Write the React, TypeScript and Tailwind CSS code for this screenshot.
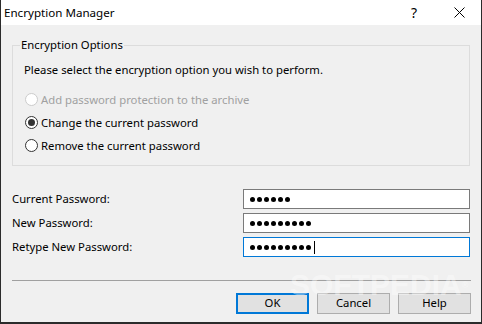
import React from "react";

const font = { fontFamily: '"Noto Sans", "Open Sans", Arial, sans-serif' };

function Dots({ n, caret }: { n: number; caret?: boolean }) {
  return (
    <div className="flex items-center gap-[2px] pl-[6px] h-full">
      {Array.from({ length: n }).map((_, i) => (
        <span key={i} className="block w-[5px] h-[5px] rounded-full bg-black" />
      ))}
      {caret && <span className="block w-[1px] h-[13px] bg-black ml-[1px]" />}
    </div>
  );
}

function Radio({ label, checked, disabled }: { label: string; checked?: boolean; disabled?: boolean }) {
  return (
    <div className="flex items-center h-[23px]">
      <span
        className={
          "flex items-center justify-center w-[13px] h-[13px] rounded-full border bg-white box-border " +
          (disabled ? "border-[#cccccc]" : "border-[#333333]")
        }
      >
        {checked && <span className="block w-[7px] h-[7px] rounded-full bg-[#333333]" />}
      </span>
      <span className={"ml-[3px] text-[11.3px] leading-[16px] " + (disabled ? "text-[#a0a0a0]" : "text-black")}>
        {label}
      </span>
    </div>
  );
}

function Field({ label, n, focused, caret }: { label: string; n: number; focused?: boolean; caret?: boolean }) {
  return (
    <div className="flex items-center h-[20px]">
      <span className="w-[231px] text-[11.3px] leading-[16px] text-black">{label}</span>
      <div
        className={
          "w-[228px] h-[20px] bg-white border box-border " +
          (focused ? "border-[#0078d7]" : "border-[#7a7a7a]")
        }
      >
        <Dots n={n} caret={caret} />
      </div>
    </div>
  );
}

function Button({ label, focused }: { label: string; focused?: boolean }) {
  return (
    <div
      className={
        "w-[73px] h-[21px] flex items-center justify-center bg-[#e1e1e1] box-border text-[11.3px] text-black " +
        (focused ? "border-2 border-[#0078d7]" : "border border-[#adadad]")
      }
    >
      {label}
    </div>
  );
}

export default function App() {
  return (
    <div className="w-[482px] h-[324px] flex flex-col bg-[#f0f0f0] relative overflow-hidden" style={font}>
      {/* Title bar */}
      <div className="h-[25px] bg-white flex items-center shrink-0 border-l border-r border-[#2b2b2b]">
        <span className="ml-[3px] text-[11.6px] text-black leading-[16px]">Encryption Manager</span>
        <span className="ml-auto text-[14px] text-black mr-[37px] leading-[16px]">?</span>
        <svg width="11" height="11" viewBox="0 0 11 11" className="mr-[16px]">
          <path d="M0.5 0.5 L10.5 10.5 M10.5 0.5 L0.5 10.5" stroke="#000" strokeWidth="1" fill="none" />
        </svg>
      </div>

      {/* Body */}
      <div className="flex-1 flex flex-col border-l border-r border-b-2 border-[#2b2b2b] px-[11px]">
        {/* Group box */}
        <div className="relative mt-[20px] h-[121px] border border-[#dcdcdc] box-border pl-[11px] pt-[16px]">
          <span className="absolute -top-[9px] left-[7px] px-[1px] bg-[#f0f0f0] text-[11.3px] leading-[16px] text-black">
            Encryption Options
          </span>
          <div className="text-[11.3px] leading-[16px] text-black">
            Please select the encryption option you wish to perform.
          </div>
          <div className="mt-[10px] ml-[1px] flex flex-col">
            <Radio label="Add password protection to the archive" disabled />
            <Radio label="Change the current password" checked />
            <Radio label="Remove the current password" />
          </div>
        </div>

        {/* Fields */}
        <div className="mt-[23px] flex flex-col gap-[4px]">
          <Field label="Current Password:" n={6} />
          <Field label="New Password:" n={9} />
          <Field label="Retype New Password:" n={9} focused caret />
        </div>

        {/* Separator */}
        <div className="mt-[23px] h-[1px] bg-[#a0a0a0] w-[459px]" />

        {/* Buttons */}
        <div className="mt-[12px] flex justify-end gap-[8px] w-[459px]">
          <Button label="OK" focused />
          <Button label="Cancel" />
          <Button label="Help" />
        </div>
      </div>

      {/* Watermark */}
      <div
        className="absolute left-[290px] top-[268px] text-[30px] font-bold text-white/40 leading-[34px] pointer-events-none select-none"
        style={{ fontFamily: '"Liberation Sans", Arial, sans-serif' }}
      >
        SOFTPEDIA<span className="text-[9px] align-top">®</span>
      </div>
    </div>
  );
}
